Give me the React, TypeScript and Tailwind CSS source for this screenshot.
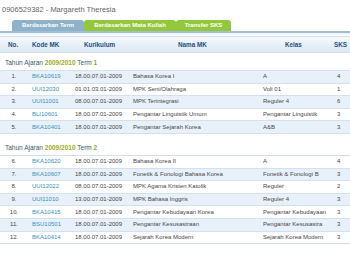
import React from "react";

type Course = { no: number; kode: string; kurikulum: string; nama: string; kelas: string; sks: number };

const terms: { term: number; mt: string; courses: Course[] }[] = [
  {
    term: 1,
    mt: "mt-[3px]",
    courses: [
      { no: 1, kode: "BKA10619", kurikulum: "18.00.07.01-2009", nama: "Bahasa Korea I", kelas: "A", sks: 4 },
      { no: 2, kode: "UUI12030", kurikulum: "01.01.03.01-2009", nama: "MPK Seni/Olahraga", kelas: "Voli 01", sks: 1 },
      { no: 3, kode: "UUI11001", kurikulum: "08.00.07.01-2009", nama: "MPK Terintegrasi", kelas: "Reguler 4", sks: 6 },
      { no: 4, kode: "BLI10601", kurikulum: "18.00.07.01-2009", nama: "Pengantar Linguistik Umum", kelas: "Pengantar Linguistik", sks: 3 },
      { no: 5, kode: "BKA10401", kurikulum: "18.00.07.01-2009", nama: "Pengantar Sejarah Korea", kelas: "A&B", sks: 3 },
    ],
  },
  {
    term: 2,
    mt: "mt-[7px]",
    courses: [
      { no: 6, kode: "BKA10620", kurikulum: "18.00.07.01-2009", nama: "Bahasa Korea II", kelas: "A", sks: 4 },
      { no: 7, kode: "BKA10607", kurikulum: "18.00.07.01-2009", nama: "Fonetik & Fonologi Bahasa Korea", kelas: "Fonetik & Fonologi B", sks: 3 },
      { no: 8, kode: "UUI12022", kurikulum: "08.00.07.01-2009", nama: "MPK Agama Kristen Katolik", kelas: "Reguler", sks: 2 },
      { no: 9, kode: "UUI11010", kurikulum: "13.00.07.01-2009", nama: "MPK Bahasa Inggris", kelas: "Reguler 4", sks: 3 },
      { no: 10, kode: "BKA10415", kurikulum: "18.00.07.01-2009", nama: "Pengantar Kebudayaan Korea", kelas: "Pengantar Kebudayaan", sks: 3 },
      { no: 11, kode: "BSU10501", kurikulum: "18.00.07.01-2009", nama: "Pengantar Kesusastraan", kelas: "Pengantar Kesusastra", sks: 3 },
      { no: 12, kode: "BKA10414", kurikulum: "18.00.07.01-2009", nama: "Sejarah Korea Modern", kelas: "Sejarah Korea Modern", sks: 3 },
    ],
  },
];

const cols = "grid grid-cols-[28px_44px_57px_131px_67px_23px]";

export default function App() {
  return (
    <div className="h-[275px] w-[350px] overflow-hidden bg-white font-['Liberation_Sans',Arial,sans-serif] text-[6px] whitespace-nowrap text-[#474747]">
      <div className="h-[20px] pl-[2px] pt-[5px] text-[7.5px] leading-[9px] text-[#666]">
        0906529382 - Margareth Theresia
      </div>

      <div className="flex h-[11px] pl-[12px] text-[6px] font-bold leading-[11px] text-white">
        <div className="w-[72px] rounded-t-[3px] bg-[#8db2ca] text-center">Berdasarkan Term</div>
        <div className="w-[92px] rounded-t-[3px] bg-[#94c83c] text-center">Berdasarkan Mata Kuliah</div>
        <div className="w-[55px] rounded-t-[3px] bg-[#94c83c] text-center">Transfer SKS</div>
      </div>
      <div className="h-[2px] bg-[#a3bdd2]" />
      <div className="h-[3px] bg-gradient-to-b from-[#e9f0f6] to-white" />

      <div className={`${cols} h-[17px] items-center border-y border-[#d3e1ec] bg-gradient-to-b from-[#f5f9fc] to-[#dbe7f2] text-[6.3px] font-bold text-[#1f4f7f]`}>
        <div className="pl-[8px]">No.</div>
        <div className="pl-[4px]">Kode MK</div>
        <div className="pl-[12px]">Kurikulum</div>
        <div className="pl-[49px]">Nama MK</div>
        <div className="pl-[25px]">Kelas</div>
        <div className="pl-[7px]">SKS</div>
      </div>

      {terms.map((group) => (
        <div key={group.term} className={group.mt}>
          <div className="flex h-[14px] items-center pl-[5px] text-[6.5px] text-[#3c5a69]">
            <span>Tahun Ajaran&nbsp;</span>
            <span className="font-bold text-[#a0aa1e]">2009/2010</span>
            <span>&nbsp;Term&nbsp;</span>
            <span className="font-bold text-[#82b023]">{group.term}</span>
          </div>
          <div className="border-b border-[#d3e1ec]">
            {group.courses.map((c) => (
              <div
                key={c.no}
                className={`${cols} h-[12.6px] items-center border-t border-[#d3e1ec] ${c.no % 2 === 1 ? "bg-[#e8f1f9]" : "bg-white"}`}
              >
                <div className="text-center">{c.no}.</div>
                <div className="pl-[4px] text-[#3b90bd]">{c.kode}</div>
                <div className="pl-[3px]">{c.kurikulum}</div>
                <div className="overflow-hidden pl-[4px]">{c.nama}</div>
                <div className="overflow-hidden pl-[3px]">{c.kelas}</div>
                <div className="pl-[10px]">{c.sks}</div>
              </div>
            ))}
          </div>
        </div>
      ))}
    </div>
  );
}
